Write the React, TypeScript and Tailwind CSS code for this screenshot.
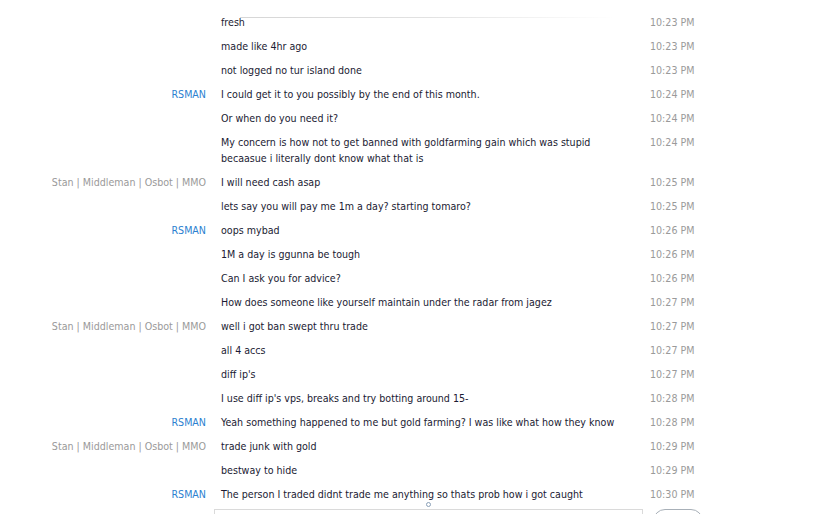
import React from "react";

type Row = { name?: string; kind?: "me" | "them"; lines: string[]; time: string };

const STAN = "Stan | Middleman | Osbot | MMO";

const rows: Row[] = [
  { lines: ["fresh"], time: "10:23 PM" },
  { lines: ["made like 4hr ago"], time: "10:23 PM" },
  { lines: ["not logged no tur island done"], time: "10:23 PM" },
  { name: "RSMAN", kind: "me", lines: ["I could get it to you possibly by the end of this month."], time: "10:24 PM" },
  { lines: ["Or when do you need it?"], time: "10:24 PM" },
  {
    lines: [
      "My concern is how not to get banned with goldfarming gain which was stupid",
      "becaasue i literally dont know what that is",
    ],
    time: "10:24 PM",
  },
  { name: STAN, kind: "them", lines: ["I will need cash asap"], time: "10:25 PM" },
  { lines: ["lets say you will pay me 1m a day? starting tomaro?"], time: "10:25 PM" },
  { name: "RSMAN", kind: "me", lines: ["oops mybad"], time: "10:26 PM" },
  { lines: ["1M a day is ggunna be tough"], time: "10:26 PM" },
  { lines: ["Can I ask you for advice?"], time: "10:26 PM" },
  { lines: ["How does someone like yourself maintain under the radar from jagez"], time: "10:27 PM" },
  { name: STAN, kind: "them", lines: ["well i got ban swept thru trade"], time: "10:27 PM" },
  { lines: ["all 4 accs"], time: "10:27 PM" },
  { lines: ["diff ip's"], time: "10:27 PM" },
  { lines: ["I use diff ip's vps, breaks and try botting around 15-"], time: "10:28 PM" },
  { name: "RSMAN", kind: "me", lines: ["Yeah something happened to me but gold farming? I was like what how they know"], time: "10:28 PM" },
  { name: STAN, kind: "them", lines: ["trade junk with gold"], time: "10:29 PM" },
  { lines: ["bestway to hide"], time: "10:29 PM" },
  { name: "RSMAN", kind: "me", lines: ["The person I traded didnt trade me anything so thats prob how i got caught"], time: "10:30 PM" },
];

export default function App() {
  return (
    <div
      className="relative w-[813px] h-[514px] overflow-hidden bg-white text-[10.6px] leading-[16px]"
      style={{ fontFamily: '"DejaVu Sans Condensed", "DejaVu Sans", sans-serif' }}
    >
      <div className="absolute left-[240px] top-[17px] h-px w-[375px] bg-gradient-to-r from-[#d6d6d6] via-[#e2e2e2] to-white" />
      <div className="h-[500px] overflow-hidden pt-[10px]">
        {rows.map((r, i) => (
          <div key={i} className="flex py-[4px]">
            <div
              className={
                "w-[206px] shrink-0 text-right whitespace-nowrap " +
                (r.kind === "me" ? "text-[#2b7fd0]" : "text-[#9a9a9a]")
              }
            >
              {r.name ?? ""}
            </div>
            <div className="ml-[15px] w-[414px] shrink-0 text-[#1b1b33]">
              {r.lines.map((l, j) => (
                <div key={j} className="whitespace-nowrap">
                  {l}
                </div>
              ))}
            </div>
            <div className="ml-[15px] whitespace-nowrap text-[#9a9a9a]">{r.time}</div>
          </div>
        ))}
      </div>
      <div className="flex items-start">
        <div className="ml-[214px] mt-[9px] h-[20px] w-[429px] border border-[#dadada] bg-white" />
        <div className="ml-[10px] mt-[9px] h-[20px] w-[50px] rounded-t-[12px] border border-[#a8b0b8]" />
      </div>
      <div className="absolute left-[426px] top-[502px] h-[5px] w-[5px] rounded-full border border-[#8aa0b8]" />
    </div>
  );
}
